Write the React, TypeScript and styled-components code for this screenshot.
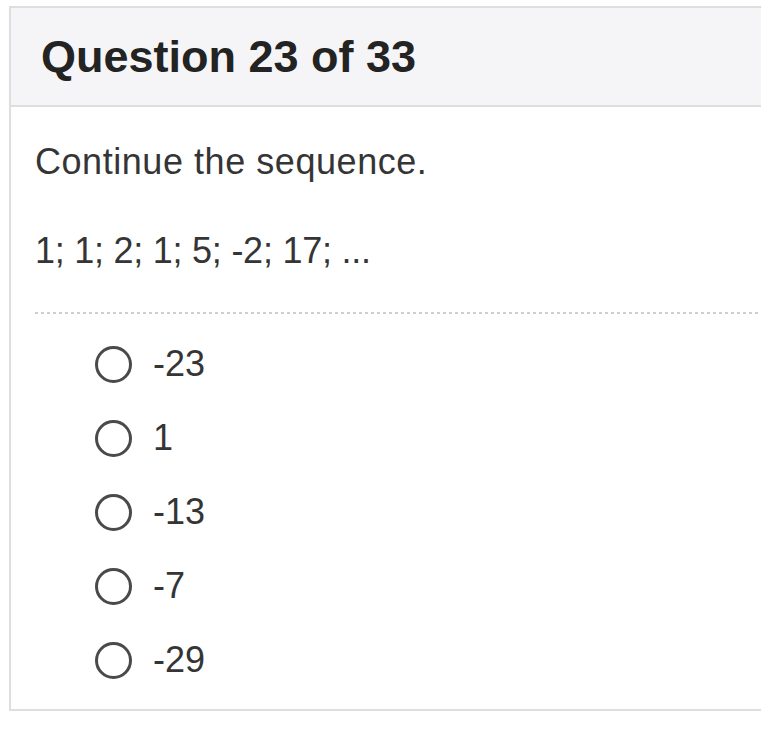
import styled, { createGlobalStyle } from 'styled-components';

const GlobalStyle = createGlobalStyle`
  html, body {
    margin: 0;
    padding: 0;
    background: #ffffff;
  }
  body {
    font-family: "Liberation Sans", Arial, sans-serif;
    color: #333333;
  }
`;

const Page = styled.div`
  padding: 6px 0 0 9px;
`;

const Card = styled.div`
  border: 2px solid #dedede;
  border-right: none;
  background: #ffffff;
`;

const Header = styled.div`
  height: 97px;
  display: flex;
  align-items: center;
  padding-left: 30px;
  background: #f5f5f7;
  border-bottom: 2px solid #dedede;
`;

const Title = styled.h2`
  margin: 0;
  font-size: 45px;
  font-weight: 700;
  color: #232323;
  letter-spacing: 0px;
`;

const Body = styled.div`
  padding: 33px 0 12px 24px;
`;

const Text = styled.p<{ $gap?: number; $spacing?: number }>`
  margin: 0 0 ${(p) => p.$gap ?? 0}px;
  font-size: 36px;
  line-height: 43px;
  letter-spacing: ${(p) => p.$spacing ?? 0}px;
  color: #353535;
`;

const Divider = styled.div`
  height: 2px;
  margin: 40px 0 13px;
  background-image: repeating-linear-gradient(
    to right,
    #cfcfcf 0 3px,
    transparent 3px 6px
  );
`;

const OptionList = styled.div`
  display: flex;
  flex-direction: column;
  padding-left: 60px;
`;

const Option = styled.label`
  height: 74px;
  display: flex;
  align-items: center;
  gap: 21px;
  cursor: pointer;
`;

const Radio = styled.span`
  width: 37px;
  height: 37px;
  box-sizing: border-box;
  border: 3px solid #4a4a4a;
  border-radius: 50%;
  flex-shrink: 0;
`;

const OptionText = styled.span`
  font-size: 36px;
  line-height: 40px;
  color: #353535;
`;

const options = ['-23', '1', '-13', '-7', '-29'];

export default function App() {
  return (
    <>
      <GlobalStyle />
      <Page>
        <Card>
          <Header>
            <Title>Question 23 of 33</Title>
          </Header>
          <Body>
            <Text $gap={46} $spacing={0.55}>
              Continue the sequence.
            </Text>
            <Text $spacing={-0.25}>1; 1; 2; 1; 5; -2; 17; ...</Text>
            <Divider />
            <OptionList>
              {options.map((o) => (
                <Option key={o}>
                  <Radio />
                  <OptionText>{o}</OptionText>
                </Option>
              ))}
            </OptionList>
          </Body>
        </Card>
      </Page>
    </>
  );
}
